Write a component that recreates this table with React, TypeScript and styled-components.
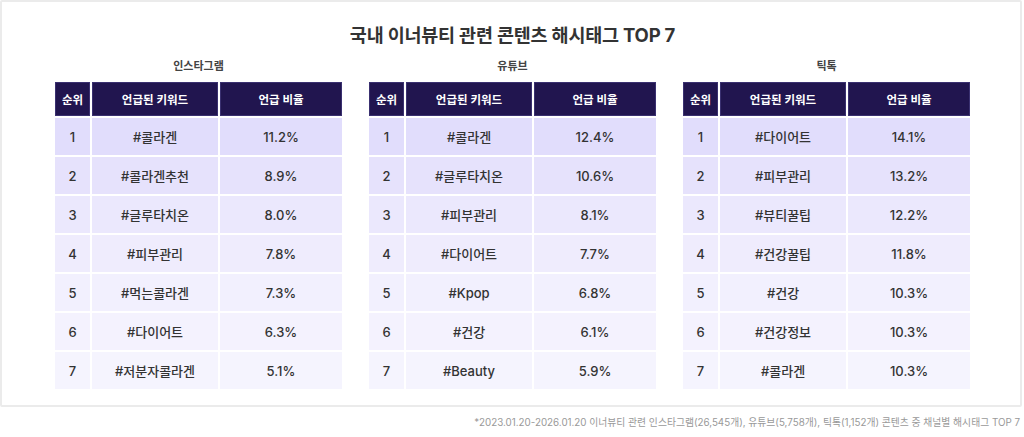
import React from 'react';
import styled, { createGlobalStyle } from 'styled-components';

const GlobalStyle = createGlobalStyle`
  html, body {
    margin: 0;
    padding: 0;
    background: #fff;
  }
  body {
    font-family: 'Inter', 'Noto Sans CJK KR', sans-serif;
    color: #333;
  }
`;

type Row = { keyword: string; ratio: string };
type Channel = { name: string; rows: Row[] };

const channels: Channel[] = [
  {
    name: '인스타그램',
    rows: [
      { keyword: '#콜라겐', ratio: '11.2%' },
      { keyword: '#콜라겐추천', ratio: '8.9%' },
      { keyword: '#글루타치온', ratio: '8.0%' },
      { keyword: '#피부관리', ratio: '7.8%' },
      { keyword: '#먹는콜라겐', ratio: '7.3%' },
      { keyword: '#다이어트', ratio: '6.3%' },
      { keyword: '#저분자콜라겐', ratio: '5.1%' },
    ],
  },
  {
    name: '유튜브',
    rows: [
      { keyword: '#콜라겐', ratio: '12.4%' },
      { keyword: '#글루타치온', ratio: '10.6%' },
      { keyword: '#피부관리', ratio: '8.1%' },
      { keyword: '#다이어트', ratio: '7.7%' },
      { keyword: '#Kpop', ratio: '6.8%' },
      { keyword: '#건강', ratio: '6.1%' },
      { keyword: '#Beauty', ratio: '5.9%' },
    ],
  },
  {
    name: '틱톡',
    rows: [
      { keyword: '#다이어트', ratio: '14.1%' },
      { keyword: '#피부관리', ratio: '13.2%' },
      { keyword: '#뷰티꿀팁', ratio: '12.2%' },
      { keyword: '#건강꿀팁', ratio: '11.8%' },
      { keyword: '#건강', ratio: '10.3%' },
      { keyword: '#건강정보', ratio: '10.3%' },
      { keyword: '#콜라겐', ratio: '10.3%' },
    ],
  },
];

// row tint fades from rank 1 to rank 7
const rowTints = ['#e1ddfc', '#e6e2fc', '#ebe8fd', '#efecfd', '#f2f0fe', '#f4f2fe', '#f5f4fe'];

const Page = styled.div`
  width: 1024px;
  height: 437px;
  display: flex;
  flex-direction: column;
`;

const Card = styled.section`
  box-sizing: border-box;
  width: 1022px;
  height: 407px;
  border: 2px solid #ebebeb;
  border-radius: 2px;
  padding: 21px 0 0 53px;
  display: flex;
  flex-direction: column;
`;

const Title = styled.h1`
  margin: 0;
  width: 915px;
  text-align: center;
  font-size: 18.5px;
  line-height: 24px;
  font-weight: 700;
  color: #333;
  letter-spacing: -0.2px;
`;

const Tables = styled.div`
  margin-top: 11px;
  display: flex;
  gap: 27px;
`;

const Column = styled.div`
  width: 287px;
  display: flex;
  flex-direction: column;
  align-items: center;
`;

const ChannelName = styled.h2`
  margin: 0;
  font-size: 11px;
  line-height: 16px;
  font-weight: 600;
  color: #444;
`;

const Table = styled.table`
  margin: 6px -2px 0;
  border-collapse: separate;
  border-spacing: 2px;
  width: 291px;
  table-layout: fixed;
`;

const HeadCell = styled.th<{ $w: number }>`
  width: ${({ $w }) => $w}px;
  height: 34px;
  padding: 0;
  background: #21154f;
  color: #fff;
  font-size: 11.5px;
  font-weight: 600;
  text-align: center;
  box-shadow: inset 0 0 0 1px #3a3070;
`;

const BodyRow = styled.tr<{ $tint: string }>`
  background: ${({ $tint }) => $tint};
`;

const Cell = styled.td`
  height: 37px;
  padding: 0;
  text-align: center;
  font-size: 13px;
  font-weight: 500;
  color: #333;
`;

const Footnote = styled.p`
  margin: 9px 4px 0 0;
  text-align: right;
  font-size: 9.8px;
  line-height: 14px;
  color: #999;
`;

const ChannelTable: React.FC<{ channel: Channel }> = ({ channel }) => (
  <Column>
    <ChannelName>{channel.name}</ChannelName>
    <Table>
      <thead>
        <tr>
          <HeadCell $w={35}>순위</HeadCell>
          <HeadCell $w={126}>언급된 키워드</HeadCell>
          <HeadCell $w={122}>언급 비율</HeadCell>
        </tr>
      </thead>
      <tbody>
        {channel.rows.map((row, i) => (
          <BodyRow key={row.keyword} $tint={rowTints[i]}>
            <Cell>{i + 1}</Cell>
            <Cell>{row.keyword}</Cell>
            <Cell>{row.ratio}</Cell>
          </BodyRow>
        ))}
      </tbody>
    </Table>
  </Column>
);

export default function App() {
  return (
    <>
      <GlobalStyle />
      <Page>
        <Card>
          <Title>국내 이너뷰티 관련 콘텐츠 해시태그 TOP 7</Title>
          <Tables>
            {channels.map(c => (
              <ChannelTable key={c.name} channel={c} />
            ))}
          </Tables>
        </Card>
        <Footnote>
          *2023.01.20-2026.01.20 이너뷰티 관련 인스타그램(26,545개), 유튜브(5,758개), 틱톡(1,152개) 콘텐츠 중 채널별 해시태그 TOP 7
        </Footnote>
      </Page>
    </>
  );
}
